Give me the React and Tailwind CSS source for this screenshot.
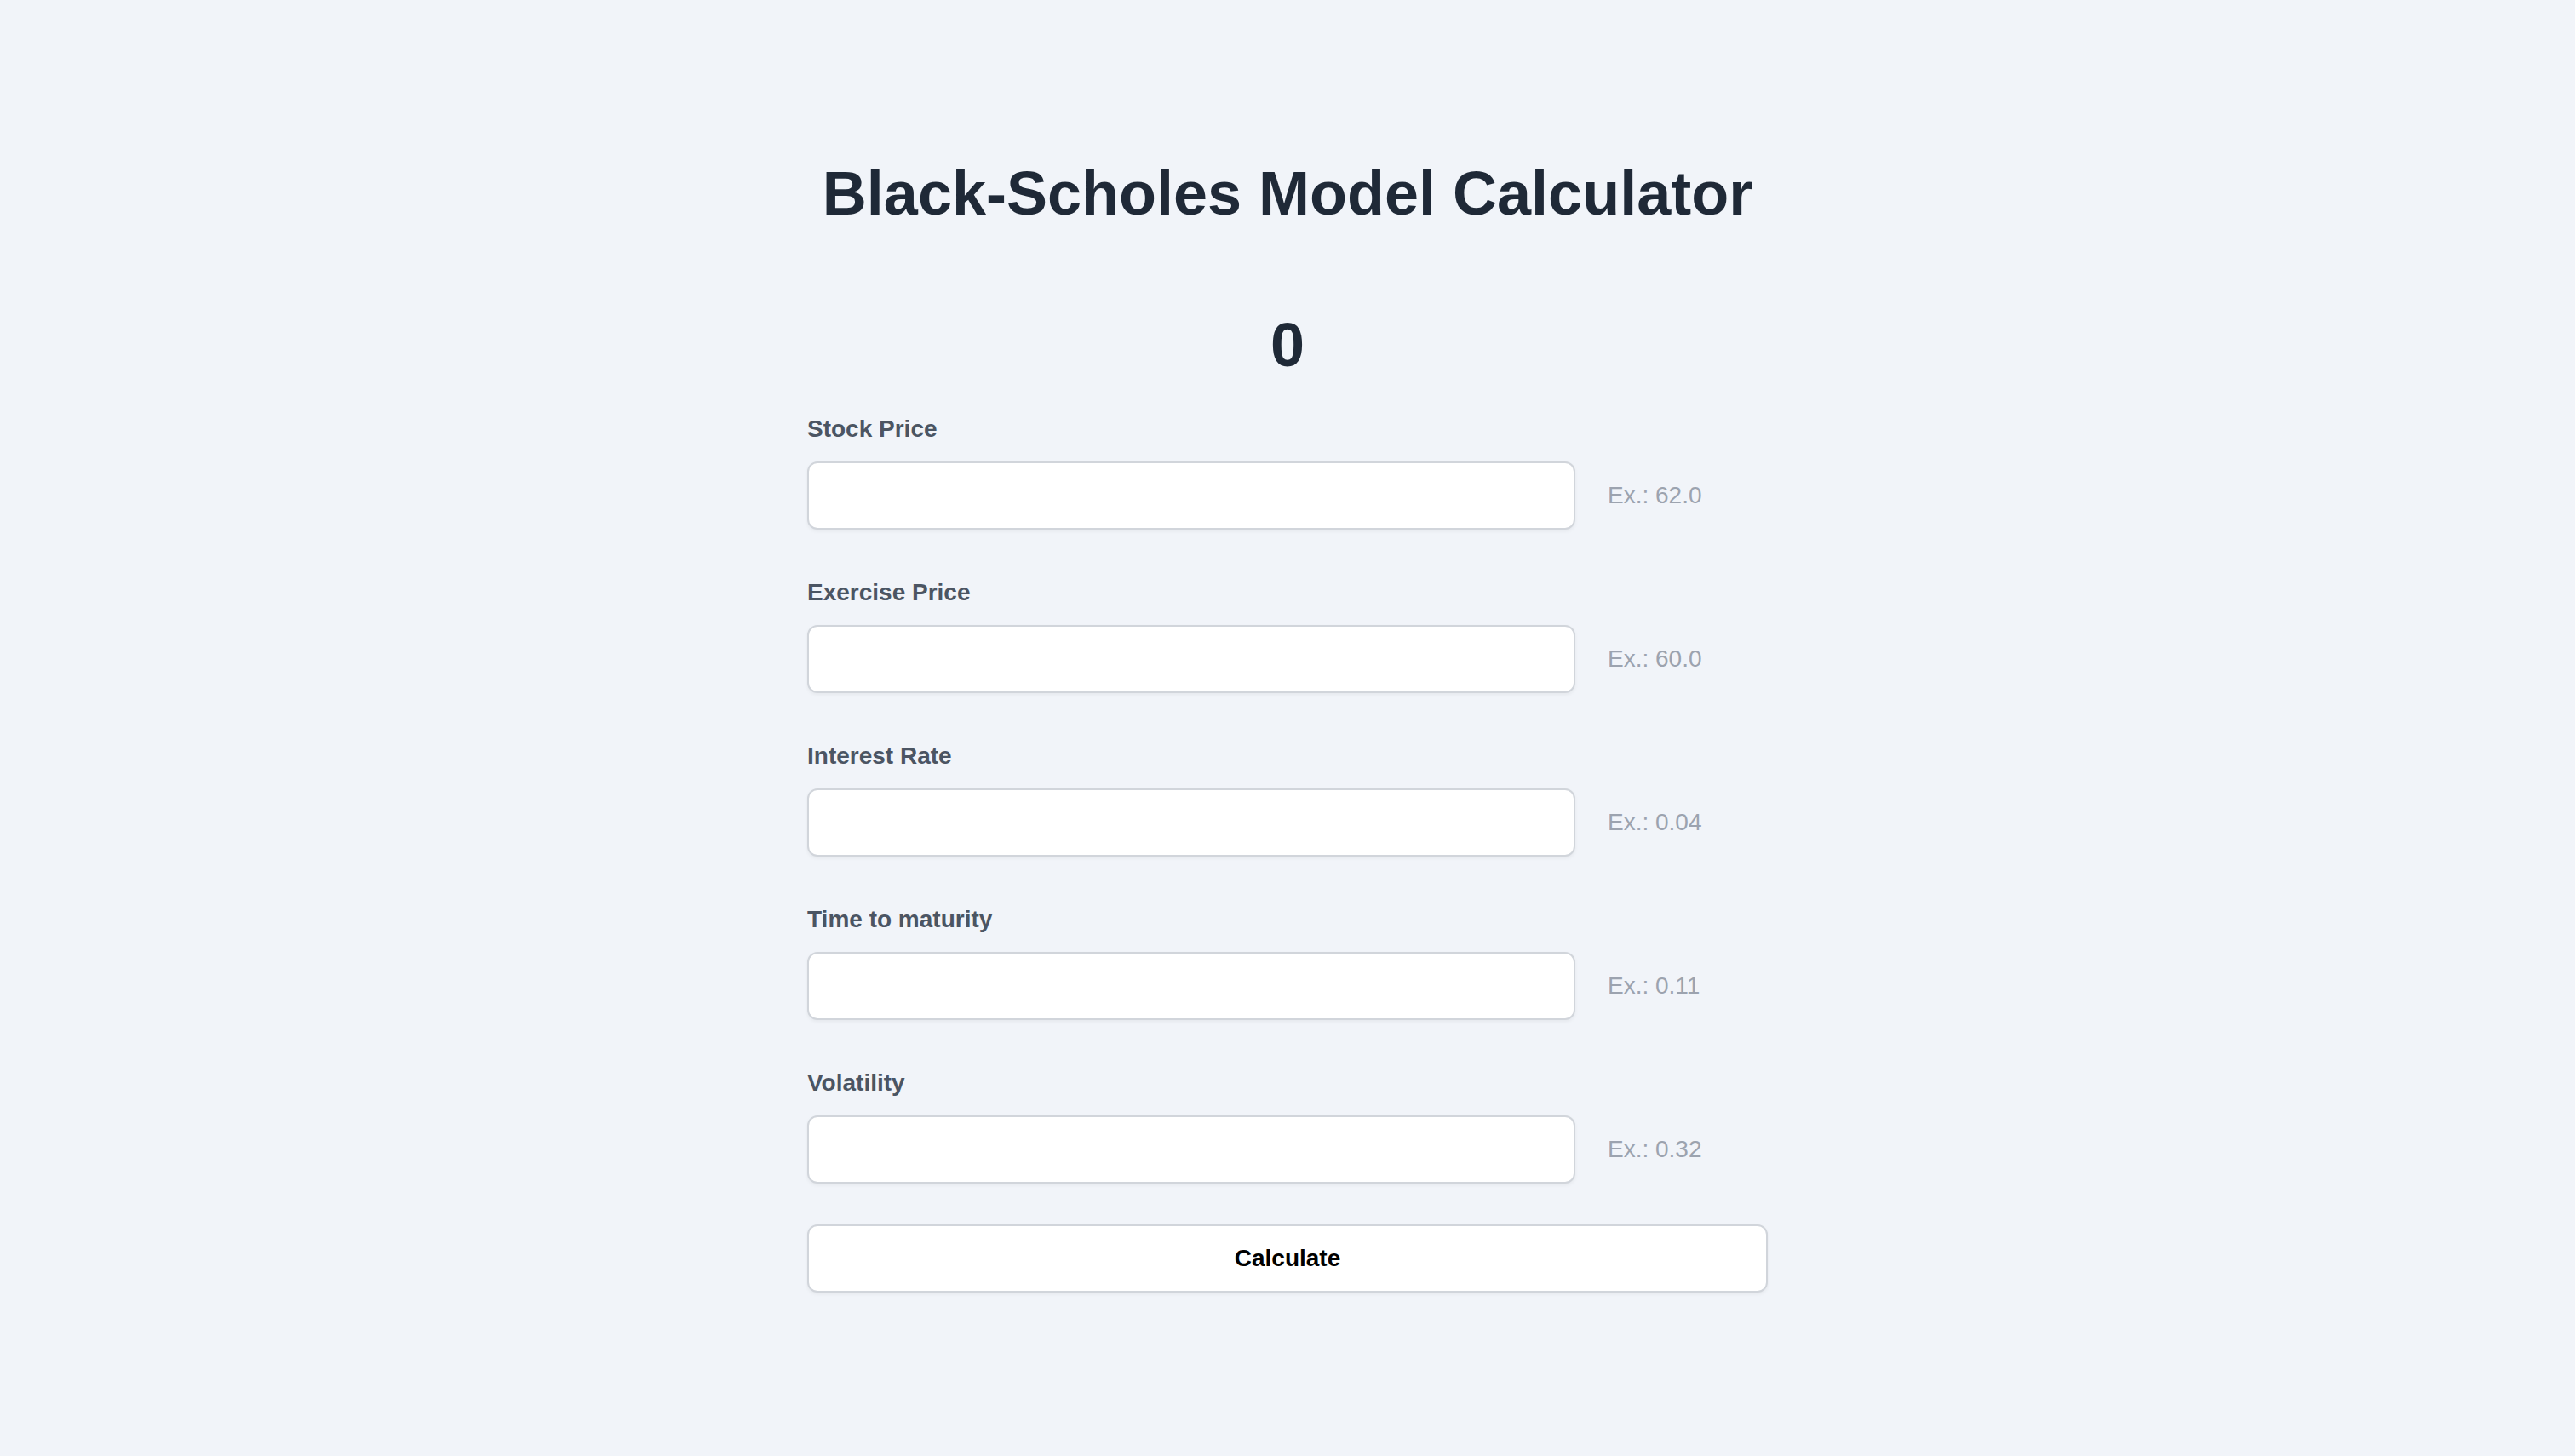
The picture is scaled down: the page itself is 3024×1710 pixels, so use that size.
import React, { useState } from "react";

const fields = [
  { id: "stockPrice", label: "Stock Price", example: "62.0" },
  { id: "exercisePrice", label: "Exercise Price", example: "60.0" },
  { id: "interestRate", label: "Interest Rate", example: "0.04" },
  { id: "timeToMaturity", label: "Time to maturity", example: "0.11" },
  { id: "volatility", label: "Volatility", example: "0.32" },
];

const App = () => {
  const [result] = useState(0);

  return (
    <div className="min-h-screen bg-[#f1f4f9] pt-[187px] font-['Liberation_Sans',Arial,sans-serif]">
      <h1 className="text-center text-[72px] leading-[80px] font-bold text-[#1f2937]">
        Black-Scholes Model Calculator
      </h1>
      <div className="mt-[98px] mx-auto w-[1128px]">
        <h2 className="text-center text-[72px] leading-[80px] font-bold text-[#1f2937]">
          {result}
        </h2>
        <form className="mt-[39px] flex flex-col">
          {fields.map((field) => (
            <div key={field.id} className="flex flex-col mb-[54px]">
              <label
                htmlFor={field.id}
                className="text-[28px] leading-[40px] font-bold text-[#4b5563]"
              >
                {field.label}
              </label>
              <div className="mt-[18px] flex items-center">
                <input
                  className="w-[902px] h-[80px] rounded-[12px] border-2 border-[#d1d5db] bg-white px-5 text-[28px] shadow-[0_2px_4px_rgba(0,0,0,0.05)] outline-none"
                  type="text"
                  name={field.id}
                  id={field.id}
                />
                <span className="ml-[38px] text-[28px] leading-[40px] text-[#9ca3af]">
                  Ex.: {field.example}
                </span>
              </div>
            </div>
          ))}
          <button
            type="button"
            className="-mt-[6px] h-[80px] w-full rounded-[12px] border-2 border-[#d1d5db] bg-white text-[28px] font-bold text-black shadow-[0_2px_4px_rgba(0,0,0,0.05)]"
          >
            Calculate
          </button>
        </form>
      </div>
    </div>
  );
};

export default App;
